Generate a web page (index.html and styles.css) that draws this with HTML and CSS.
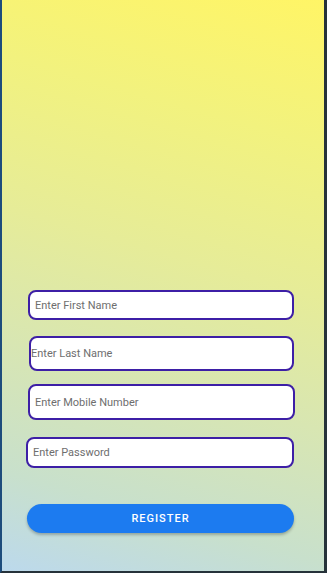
FILE: index.html
```html
<!DOCTYPE html>
<html>
<head>
<meta charset="utf-8">
<link rel="stylesheet" href="styles.css">
</head>
<body>
<div class="frame">
  <div class="spacer"></div>
  <form class="form">
    <input class="field field-first" type="text" placeholder="Enter First Name">
    <input class="field field-last" type="text" placeholder="Enter Last Name">
    <input class="field field-mobile" type="text" placeholder="Enter Mobile Number">
    <input class="field field-pass" type="password" placeholder="Enter Password">
    <button class="register" type="button">REGISTER</button>
  </form>
</div>
</body>
</html>
```
FILE: styles.css
```css
html, body {
  margin: 0;
  padding: 0;
  height: 100%;
}
body {
  background: #26323a;
  font-family: Roboto, "Liberation Sans", sans-serif;
}
.frame {
  box-sizing: border-box;
  height: 573px;
  width: 327px;
  border-left: 2px solid #1d4c7c;
  border-right: 3px solid #26323a;
  border-bottom: 2px solid #26323a;
  background: linear-gradient(196deg, #fff566 0%, #f2f27e 22%, #e6ec98 45%, #d8e6b2 65%, #c8e0cc 85%, #bcd9ec 100%);
  display: flex;
  flex-direction: column;
}
.spacer {
  flex: 1;
}
.form {
  display: flex;
  flex-direction: column;
  align-items: flex-start;
  margin: 0;
  padding-bottom: 38px;
}
.field {
  box-sizing: border-box;
  border: 2px solid #3d1fa6;
  border-radius: 8px;
  background: #ffffff;
  font-family: Roboto, "Liberation Sans", sans-serif;
  font-size: 11px;
  color: #333;
  padding: 0 0 0 5px;
  outline: none;
}
.field::placeholder {
  color: #6e6e6e;
}
.field-first {
  margin-left: 26px;
  width: 266px;
  height: 30px;
}
.field-last {
  margin-left: 27px;
  margin-top: 16px;
  width: 265px;
  height: 35px;
  padding-left: 0;
}
.field-mobile {
  margin-left: 26px;
  margin-top: 13px;
  width: 267px;
  height: 36px;
}
.field-pass {
  margin-left: 24px;
  margin-top: 17px;
  width: 268px;
  height: 31px;
}
.register {
  margin-left: 25px;
  margin-top: 36px;
  width: 267px;
  height: 29px;
  border: none;
  border-radius: 15px;
  background: #1c7bf0;
  color: #ffffff;
  font-family: Roboto, "Liberation Sans", sans-serif;
  font-weight: 500;
  font-size: 11px;
  letter-spacing: 1px;
  box-shadow: 0 2px 3px rgba(0, 0, 0, 0.25);
}
```
